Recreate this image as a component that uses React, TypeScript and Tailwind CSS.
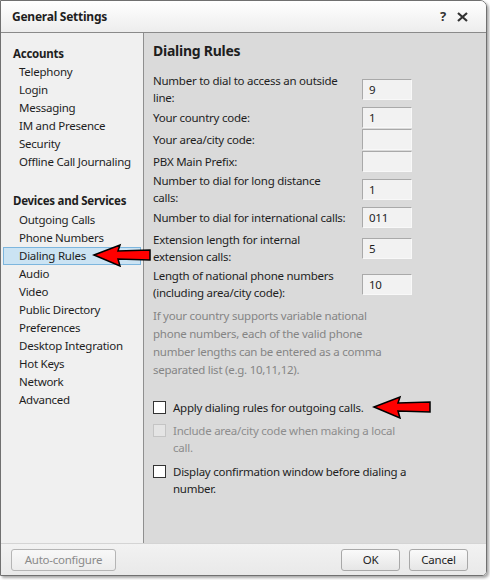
const font = { fontFamily: '"Segoe UI", "Noto Sans", sans-serif' };

const accounts = ['Telephony', 'Login', 'Messaging', 'IM and Presence', 'Security', 'Offline Call Journaling'];
const devices = ['Outgoing Calls', 'Phone Numbers', 'Dialing Rules', 'Audio', 'Video', 'Public Directory', 'Preferences', 'Desktop Integration', 'Hot Keys', 'Network', 'Advanced'];

type Row = { label: string[]; value: string; mt?: string };
const rows: Row[] = [
  { label: ['Number to dial to access an outside', 'line:'], value: '9' },
  { label: ['Your country code:'], value: '1' },
  { label: ['Your area/city code:'], value: '' },
  { label: ['PBX Main Prefix:'], value: '' },
  { label: ['Number to dial for long distance', 'calls:'], value: '1' },
  { label: ['Number to dial for international calls:'], value: '011' },
  { label: ['Extension length for internal', 'extension calls:'], value: '5', mt: 'mt-[3px]' },
  { label: ['Length of national phone numbers', '(including area/city code):'], value: '10', mt: 'mt-[2px]' },
];

function RedArrow({ className }: { className: string }) {
  return (
    <svg className={className} width="60" height="24" viewBox="0 0 60 24">
      <polygon points="2,12 28,2 26,8 58,7 58,17 26,16 28,23" fill="#ff0000" stroke="#000" strokeWidth="1.5" strokeLinejoin="miter" />
    </svg>
  );
}

function Checkbox({ lines, disabled }: { lines: string[]; disabled?: boolean }) {
  return (
    <div className="flex items-start">
      <div className={`mt-[2px] w-[13px] h-[13px] border shrink-0 ${disabled ? 'border-[#c4c4c4] bg-[#e4e4e4]' : 'border-[#333] bg-white'}`} />
      <div className={`ml-[7px] leading-[17px] ${disabled ? 'text-[#8d8d8d]' : 'text-[#1e1e1e]'}`}>
        {lines.map((l) => <div key={l}>{l}</div>)}
      </div>
    </div>
  );
}

export default function App() {
  return (
    <div className="w-[490px] h-[580px] bg-white relative text-[11.5px] tracking-[-0.25px] whitespace-nowrap text-[#1e1e1e]" style={font}>
      <div className="w-[487px] h-[576px] border border-[#707070] rounded-tr-[7px] rounded-br-[5px] shadow-[2px_2px_3px_rgba(0,0,0,0.35)] flex flex-col overflow-hidden">
        <div className="h-[32px] shrink-0 border-b border-[#8a8a8a] bg-gradient-to-b from-white to-[#ededed] flex items-center px-[11px]">
          <span className="font-bold text-[12px]">General Settings</span>
          <div className="ml-auto flex items-center gap-[11px] pr-[7px] font-bold text-[#333]">
            <span className="text-[13px]">?</span>
            <svg width="11" height="10" viewBox="0 0 11 10"><path d="M1 1 L10 9 M10 1 L1 9" stroke="#333" strokeWidth="2.2" /></svg>
          </div>
        </div>
        <div className="h-[511px] shrink-0 flex border-b border-[#d4d4d4]">
          <div className="w-[143px] shrink-0 bg-[#f0f0f0] border-r border-[#8f8f8f] pt-[11px] px-[2px] leading-[18px]">
            <div className="font-bold pl-[10px] leading-[19px]">Accounts</div>
            {accounts.map((a) => <div key={a} className="pl-[15px] border border-transparent h-[18px] leading-[16px]">{a}</div>)}
            <div className="font-bold pl-[10px] mt-[20px] leading-[20px]">Devices and Services</div>
            {devices.map((d) => (
              <div key={d} className={`pl-[15px] border ${d === 'Dialing Rules' ? 'bg-[#cbe3f3] border-[#7db6de]' : 'border-transparent'} h-[18px] leading-[16px]`}>{d}</div>
            ))}
          </div>
          <div className="flex-1 bg-[#dadada] pl-[9px] pt-[8px]">
            <div className="font-bold text-[14px] leading-[20px]">Dialing Rules</div>
            <div className="mt-[11px]">
              {rows.map((r) => (
                <div key={r.label[0]} className={`flex items-center ${r.label.length > 1 ? 'h-[34px]' : 'h-[22px]'} ${r.mt ?? ''}`}>
                  <div className="w-[209px] leading-[17px]">
                    {r.label.map((l) => <div key={l}>{l}</div>)}
                  </div>
                  <div className="w-[50px] h-[21px] bg-[#f2f2f2] border border-t-[#a9a9a9] border-l-[#a9a9a9] border-r-[#f8f8f8] border-b-[#f8f8f8] pl-[6px] leading-[19px]">{r.value}</div>
                </div>
              ))}
            </div>
            <div className="mt-[6px] leading-[18px] text-[#858585]">
              <div>If your country supports variable national</div>
              <div>phone numbers, each of the valid phone</div>
              <div>number lengths can be entered as a comma</div>
              <div>separated list (e.g. 10,11,12).</div>
            </div>
            <div className="mt-[20px] flex flex-col gap-[6px]">
              <Checkbox lines={['Apply dialing rules for outgoing calls.']} />
              <Checkbox lines={['Include area/city code when making a local', 'call.']} disabled />
              <div className="mt-[1px]">
                <Checkbox lines={['Display confirmation window before dialing a', 'number.']} />
              </div>
            </div>
          </div>
        </div>
        <div className="flex-1 bg-gradient-to-b from-[#f2f2f2] to-[#e9e9e9] flex items-start pt-[5px] pl-[10px] pr-[18px]">
          <button className="w-[105px] h-[22px] rounded-[3px] border border-[#b5b5b5] bg-gradient-to-b from-[#f8f8f8] to-[#ececec] text-[#8a8a8a]">Auto-configure</button>
          <button className="ml-auto w-[59px] h-[22px] rounded-[3px] border border-[#a8a8a8] bg-gradient-to-b from-[#fafafa] to-[#e6e6e6]">OK</button>
          <button className="ml-[9px] w-[59px] h-[22px] rounded-[3px] border border-[#a8a8a8] bg-gradient-to-b from-[#fafafa] to-[#e6e6e6]">Cancel</button>
        </div>
      </div>
      <RedArrow className="absolute left-[92px] top-[243px]" />
      <RedArrow className="absolute left-[372px] top-[395px]" />
    </div>
  );
}
